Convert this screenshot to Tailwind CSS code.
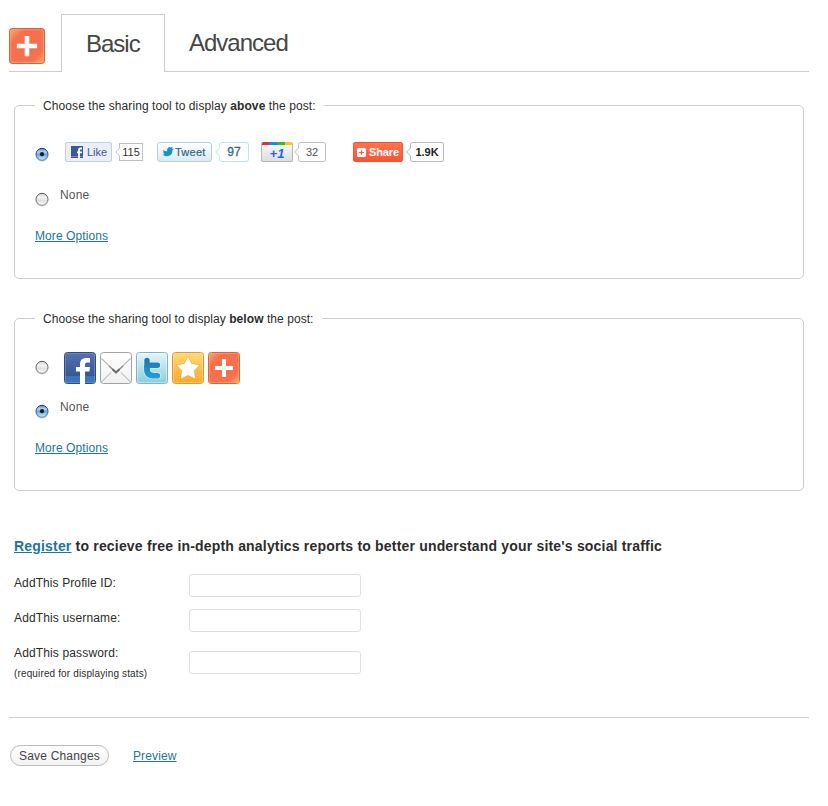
<!DOCTYPE html>
<html lang="en">
<head>
<meta charset="utf-8">
<title>AddThis Settings</title>
<script src="https://cdn.jsdelivr.net/npm/@tailwindcss/browser@4"></script>
</head>
<body class="bg-white font-['Liberation_Sans',Arial,sans-serif] text-[12px] leading-[17px] text-[#2c2c2c]">
<svg width="0" height="0" class="absolute">
  <defs>
    <linearGradient id="orange" x1="0" y1="0" x2="1" y2="1">
      <stop offset="0" stop-color="#fbb07c"/><stop offset=".24" stop-color="#f5704e"/><stop offset=".78" stop-color="#f5704e"/><stop offset="1" stop-color="#fbb070"/>
    </linearGradient>
    <linearGradient id="navy" x1="0" y1="0" x2="0" y2="1"><stop offset="0" stop-color="#5872ab"/><stop offset="1" stop-color="#2f4d8e"/></linearGradient>
    <linearGradient id="paper" x1="0" y1="0" x2="0" y2="1"><stop offset="0" stop-color="#fff"/><stop offset="1" stop-color="#f0f0f0"/></linearGradient>
    <linearGradient id="sky" x1="0" y1="0" x2="0" y2="1"><stop offset="0" stop-color="#e6f6fa"/><stop offset="1" stop-color="#8accdb"/></linearGradient>
    <linearGradient id="tee" gradientUnits="userSpaceOnUse" x1="0" y1="6" x2="0" y2="26"><stop offset="0" stop-color="#1a76ad"/><stop offset="1" stop-color="#1fa0dc"/></linearGradient>
    <linearGradient id="gold" x1="0" y1="0" x2="0" y2="1"><stop offset="0" stop-color="#ffdb78"/><stop offset="1" stop-color="#fda829"/></linearGradient>
    <linearGradient id="off" x1="0" y1="0" x2="0" y2="1"><stop offset="0" stop-color="#d5d5d5"/><stop offset=".35" stop-color="#f3f3f3"/><stop offset=".6" stop-color="#dedede"/><stop offset="1" stop-color="#fff"/></linearGradient>
    <linearGradient id="on" x1="0" y1="0" x2="0" y2="1"><stop offset="0" stop-color="#4f83c8"/><stop offset=".3" stop-color="#b5d5f3"/><stop offset=".5" stop-color="#68a8e0"/><stop offset="1" stop-color="#c4f2ff"/></linearGradient>
    <linearGradient id="rim" x1="0" y1="0" x2="0" y2="1"><stop offset="0" stop-color="#20375f"/><stop offset="1" stop-color="#5b7fa5"/></linearGradient>
    <linearGradient id="rimoff" x1="0" y1="0" x2="0" y2="1"><stop offset="0" stop-color="#555"/><stop offset="1" stop-color="#8b8b8b"/></linearGradient>
    <symbol id="radio-off" viewBox="0 0 14 15"><ellipse cx="7" cy="8.2" rx="6.4" ry="6.3" fill="#ddd"/><circle cx="7" cy="7.3" r="6" fill="url(#off)" stroke="url(#rimoff)"/></symbol>
    <symbol id="radio-on" viewBox="0 0 14 15"><ellipse cx="7" cy="8.2" rx="6.4" ry="6.3" fill="#ccd5dc"/><circle cx="7" cy="7.3" r="6" fill="url(#on)" stroke="url(#rim)"/><circle cx="7" cy="7.2" r="2.1" fill="#111c2c"/></symbol>
    <symbol id="addthis" viewBox="0 0 32 32"><rect x=".5" y=".5" width="31" height="31" rx="3" fill="url(#orange)" stroke="#dd6337"/><rect x="1.5" y="1.5" width="29" height="29" rx="2" fill="none" stroke="#fbb58d" stroke-opacity=".5"/><path d="M14 7h4v7h7v4h-7v7h-4v-7H7v-4h7z" fill="#fff"/></symbol>
  </defs>
</svg>

<header class="flex h-[72px] pl-[9px] pr-[19px] pt-[14px]">
  <div class="h-[58px] w-[52px] border-b border-[#ccc] pt-[14px]"><svg width="36" height="36"><use href="#addthis"/></svg></div>
  <div class="h-[58px] w-[104px] border border-b-0 border-[#ccc] pl-[24px] pt-[14px] text-[24px] leading-[30px] tracking-[-1px] text-[#464646]">Basic</div>
  <div class="h-[58px] flex-1 border-b border-[#ccc] pl-[24px] pt-[14px] text-[24px] leading-[30px] tracking-[-1px] text-[#464646]">Advanced</div>
</header>

<main class="pt-[25px]">
  <fieldset class="ml-[14px] h-[182px] w-[790px] rounded-[5px] border border-[#ccc] px-[20px]">
    <legend class="h-[17px] whitespace-nowrap px-[8px] leading-[18px] tracking-[0.09px]">Choose the sharing tool to display <b>above</b> the post:</legend>
    <div class="mt-[28px] flex h-[20px]">
      <svg width="14" height="15" class="mt-[5px]"><use href="#radio-on"/></svg>
      <div class="ml-[16px] flex h-[20px] w-[47px] items-center rounded-[2px] border border-[#c5cee3] bg-[#eceef5] pl-[5px] text-[#3b5998]">
        <svg width="12" height="12" viewBox="0 0 12 12"><path d="M0 0h12v12H0z" fill="#3b5998"/><path d="M0 10.5h12" stroke="#7187b5"/><path d="M8 12V4.200Q8 2.500 9.500 2.500H11M6 6.300h5" fill="none" stroke="#fff" stroke-width="1.800"/></svg>
        <span class="ml-[4px] text-[11px] leading-[18px]">Like</span>
      </div>
      <svg width="5" height="20" viewBox="0 0 5 20" class="relative left-px z-10 ml-[2px]"><path d="M5 5.500L.7 10 5 14.500" fill="#fff" stroke="#c1c1c1"/></svg>
      <div class="mt-px h-[18px] w-[24px] border border-[#c1c1c1] text-center text-[11px] leading-[17px] text-[#333]">115</div>
      <div class="ml-[14px] flex h-[20px] w-[55px] items-center rounded-[3px] border border-[#b3cfdc] bg-linear-to-b from-white to-[#dceaf2] pl-[4px] text-[#2d6987]">
        <svg width="12" height="12" viewBox="0 0 13 12"><path d="M0 8.500Q2 9 3.200 8.200Q1.400 8 1.200 6.400L2.200 6.300Q.8 5.300 1.200 3.800Q3.500 5.500 5.600 5Q5 2 7.300.8Q8.300.2 9.200 1.200L11.700.5L10.800 2.400L12.800 2.500L11.200 4.200Q11.600 8 8.500 9.800Q4 12 0 8.500z" fill="#0f94cf"/></svg>
        <span class="ml-px text-[11px] leading-[18px] tracking-[0.25px] [-webkit-text-stroke:0.2px_#2d6987]">Tweet</span>
      </div>
      <svg width="5" height="20" viewBox="0 0 5 20" class="relative left-px z-10 ml-[2px]"><path d="M5 5.500L.7 10 5 14.500" fill="#fff" stroke="#bfddeb"/></svg>
      <div class="h-[20px] w-[30px] rounded-[3px] border border-[#c3deee] text-center text-[12px] leading-[19px] text-[#2d6987] [-webkit-text-stroke:0.3px_#2d6987]">97</div>
      <div class="ml-[12px] h-[20px] w-[32px] overflow-hidden rounded-[2px] border border-t-0 border-[#b5b5b5] bg-linear-to-b from-[#fafafa] to-[#dedede]">
        <div class="-mx-px flex h-[3px]"><i class="w-[8px] bg-[#de2d3b]"></i><i class="w-[8px] bg-[#1688e6]"></i><i class="w-[8px] bg-[#39b72c]"></i><i class="w-[8px] bg-[#fbc527]"></i></div>
        <div class="text-center text-[13px] font-bold italic leading-[17px] text-[#226ae4]">+1</div>
      </div>
      <svg width="5" height="20" viewBox="0 0 5 20" class="relative left-px z-10"><path d="M5 5.500L.7 10 5 14.500" fill="#fff" stroke="#bbb"/></svg>
      <div class="h-[20px] w-[28px] rounded-[2px] border border-[#c2c2c2] text-center text-[11px] leading-[19px] text-[#555]">32</div>
      <div class="ml-[27px] flex h-[20px] w-[50px] items-center rounded-[2px] border border-[#ef5534] bg-linear-to-b from-[#ff7351] to-[#fa5432] pl-[3px] text-white">
        <svg width="9" height="9" viewBox="0 0 9 9"><rect width="9" height="9" rx="1.500" fill="#fff"/><path d="M4.500 2v5M2 4.500h5" stroke="#f4603f"/></svg>
        <b class="ml-[3px] text-[11px] leading-[18px] tracking-[-0.1px]">Share</b>
      </div>
      <svg width="5" height="20" viewBox="0 0 5 20" class="relative left-px z-10 ml-[2px]"><path d="M5 5.500L.7 10 5 14.500" fill="#fff" stroke="#b5b5b5"/></svg>
      <b class="h-[20px] w-[34px] rounded-[2px] border border-[#bbb] text-center text-[11px] leading-[19px] text-[#222]">1.9K</b>
    </div>
    <div class="mt-[25px] flex h-[26px] text-[#555]">
      <svg width="14" height="15" class="mt-[5px]"><use href="#radio-off"/></svg>
      <span class="ml-[11px] tracking-[0.2px]">None</span>
    </div>
    <a class="mt-[15px] block w-fit tracking-[0.08px] text-[#21759b] underline" href="#">More Options</a>
  </fieldset>

  <fieldset class="ml-[14px] mt-[31px] h-[181px] w-[790px] rounded-[5px] border border-[#ccc] px-[20px]">
    <legend class="h-[17px] whitespace-nowrap px-[8px] leading-[18px] tracking-[0.06px]">Choose the sharing tool to display <b>below</b> the post:</legend>
    <div class="mt-[25px] flex h-[32px] gap-[4px]">
      <svg width="14" height="15" class="mr-[11px] mt-[8px]"><use href="#radio-off"/></svg>
      <svg width="32" height="32" viewBox="0 0 32 32"><rect x=".5" y=".5" width="31" height="31" rx="3" fill="url(#navy)" stroke="#294c8b"/><path d="M1 24h30v5.500q0 1.500-1.500 1.500h-27Q1 31 1 29.500z" fill="#3c73b9"/><rect x="1.500" y="1.500" width="29" height="29" rx="2" fill="none" stroke="#8ea5d2" stroke-opacity=".45"/><path d="M16 32V19.500h-4v-4.500h4V12Q16 6 22 6h4v4.500h-3q-2 0-2 2.200V15h5l-.6 4.500H21V32z" fill="#fff"/></svg>
      <svg width="32" height="32" viewBox="0 0 32 32"><rect x=".5" y=".5" width="31" height="31" rx="3" fill="url(#paper)" stroke="#a2a2a2"/><path d="M1.500 30L11 20.500M30.500 30L21 20.500" stroke="#a8a8a8"/><path d="M1.500 6.500L16 20.500L30.500 6.500" fill="none" stroke="#b8b8b8" stroke-width="1.100"/><path d="M9 14L16 20.500L23 14" fill="none" stroke="#8f8f8f" stroke-width="1.400"/><path d="M12.500 17.300L16 20.500L19.500 17.300" fill="none" stroke="#6a6a6a" stroke-width="2"/></svg>
      <svg width="32" height="32" viewBox="0 0 32 32"><rect x=".5" y=".5" width="31" height="31" rx="3" fill="url(#sky)" stroke="#78b5c5"/><rect x="1.500" y="1.500" width="29" height="29" rx="2" fill="none" stroke="#fff" stroke-opacity=".4"/><path d="M11 8.500v9q0 6.200 6 6.200h5M11 13.200h11" fill="none" stroke="#fff" stroke-opacity=".45" stroke-width="7" stroke-linecap="round"/><path d="M11 8.500v9q0 6.200 6 6.200h4.500M11 13.200h10.500" fill="none" stroke="url(#tee)" stroke-width="5.400" stroke-linecap="round"/><path d="M11 13v5q0 5 6 5.500" fill="none" stroke="url(#tee)" stroke-width="5.600"/></svg>
      <svg width="32" height="32" viewBox="0 0 32 32"><rect x=".5" y=".5" width="31" height="31" rx="3" fill="url(#gold)" stroke="#e2982e"/><rect x="1.500" y="1.500" width="29" height="29" rx="2" fill="none" stroke="#ffe5a0" stroke-opacity=".5"/><path d="M16 5.500l3.500 6.700 7.300 1.200-5.200 5.300 1.100 7.300L16 22.700l-6.700 3.300 1.100-7.300-5.200-5.300 7.300-1.200z" fill="#fff" stroke="#e9a83c" stroke-width="2" stroke-linejoin="round"/><path d="M16 5.500l3.500 6.700 7.300 1.200-5.200 5.300 1.100 7.300L16 22.700l-6.700 3.300 1.100-7.300-5.200-5.300 7.300-1.200z" fill="#fff" stroke="#fff" stroke-width=".7" stroke-linejoin="round"/></svg>
      <svg width="32" height="32"><use href="#addthis"/></svg>
    </div>
    <div class="mt-[15px] flex h-[26px] text-[#555]">
      <svg width="14" height="15" class="mt-[5px]"><use href="#radio-on"/></svg>
      <span class="ml-[11px] tracking-[0.2px]">None</span>
    </div>
    <a class="mt-[15px] block w-fit tracking-[0.08px] text-[#21759b] underline" href="#">More Options</a>
  </fieldset>

  <section class="pl-[14px] pt-[45px]">
    <h2 class="whitespace-nowrap text-[14px] font-bold leading-[20px] tracking-[0.185px]"><a class="text-[#21759b] underline" href="#">Register</a> to recieve free in-depth analytics reports to better understand your site's social traffic</h2>
    <div class="mt-[18px] flex h-[35px]"><label class="w-[175px] pt-px tracking-[0.1px]">AddThis Profile ID:</label><input class="h-[23px] w-[172px] rounded-[3px] border border-[#dfdfdf]"></div>
    <div class="flex h-[35px]"><label class="w-[175px] pt-px tracking-[0.14px]">AddThis username:</label><input class="h-[23px] w-[172px] rounded-[3px] border border-[#dfdfdf]"></div>
    <div class="flex h-[73px]"><label class="w-[175px] pt-px tracking-[0.14px]">AddThis password:<small class="mt-[3px] block text-[10px]">(required for displaying stats)</small></label><input class="mt-[7px] h-[23px] w-[172px] rounded-[3px] border border-[#dfdfdf]"></div>
  </section>
  <footer class="ml-[9px] flex w-[800px] items-center border-t border-[#ccc] pl-px pt-[27px]">
    <button class="h-[21px] w-[99px] whitespace-nowrap rounded-full border border-[#bbb] bg-linear-to-b from-white to-[#f2f2f2] pt-px leading-[19px] tracking-[0.18px] text-[#464646]">Save Changes</button>
    <a class="ml-[24px] pt-[2px] tracking-[0.12px] text-[#21759b] underline" href="#">Preview</a>
  </footer>
</main>
</body>
</html>
